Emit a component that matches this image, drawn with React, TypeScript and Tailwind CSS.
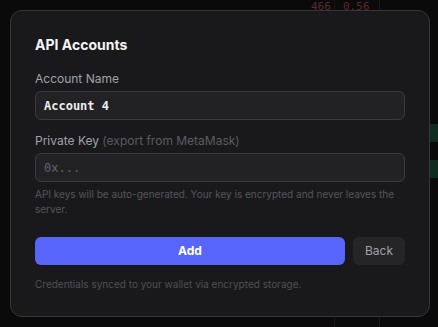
import React from 'react'

/** Dialog over a dimmed order book: add an API account from a private key. */
export default function App() {
  return (
    <div
      className="relative w-[438px] h-[327px] overflow-hidden bg-[#0a0a0a] p-[10px] flex"
      style={{ fontFamily: 'Inter, "Noto Sans", sans-serif' }}
    >
      {/* Dimmed page behind the overlay */}
      <div aria-hidden="true" className="absolute inset-0">
        <div className="absolute left-[334px] top-0 h-full w-px bg-[#1c1414]" />
        <div className="absolute left-[379px] top-0 h-full w-px bg-[#1a1a1a]" />
        <div className="absolute left-[311px] top-[1px] flex gap-[12px] text-[11px] leading-[12px] text-[#5c2b2b] font-['DejaVu_Sans_Mono',monospace]">
          <span>466</span>
          <span>0.56</span>
        </div>
        <div className="absolute left-[430px] top-[124px] h-[18px] w-[8px] bg-[#0f2a1e]" />
        <div className="absolute left-[430px] top-[160px] h-[18px] w-[8px] bg-[#0f2a1e]" />
      </div>

      <div className="relative shrink-0 flex flex-col w-[420px] h-[307px] rounded-xl border border-[#35353a] bg-[#19191b] px-6 pt-6">
        <h2 className="text-[14px] leading-5 font-bold text-[#f4f4f5]">API Accounts</h2>

        <label className="mt-4 text-[12px] leading-4 text-[#a1a1aa]">Account Name</label>
        <div className="mt-1 h-[29px] rounded-md border border-[#3a3a40] bg-[#222225] px-[8px] flex items-center text-[12px] font-bold text-[#ededed] font-['DejaVu_Sans_Mono',monospace]">
          Account 4
        </div>

        <label className="mt-[13px] text-[12px] leading-4 text-[#a1a1aa]">
          Private Key <span className="text-[#5b5b62]">(export from MetaMask)</span>
        </label>
        <div className="mt-1 h-[29px] rounded-md border border-[#3a3a40] bg-[#222225] px-[8px] flex items-center text-[12px] text-[#62626a] font-['DejaVu_Sans_Mono',monospace]">
          0x...
        </div>
        <p className="mt-[5px] text-[10px] leading-[15px] text-[#55555c]">
          API keys will be auto-generated. Your key is encrypted and never leaves the server.
        </p>

        <div className="mt-5 flex gap-2">
          <button className="flex-1 h-[28px] rounded-md bg-[#5865fb] text-[12px] font-bold text-white">Add</button>
          <button className="w-[52px] h-[28px] rounded-md bg-[#252528] text-[12px] text-[#a1a1aa]">Back</button>
        </div>

        <p className="mt-3 text-[10px] leading-[15px] text-[#4f4f56]">
          Credentials synced to your wallet via encrypted storage.
        </p>
      </div>
    </div>
  )
}
